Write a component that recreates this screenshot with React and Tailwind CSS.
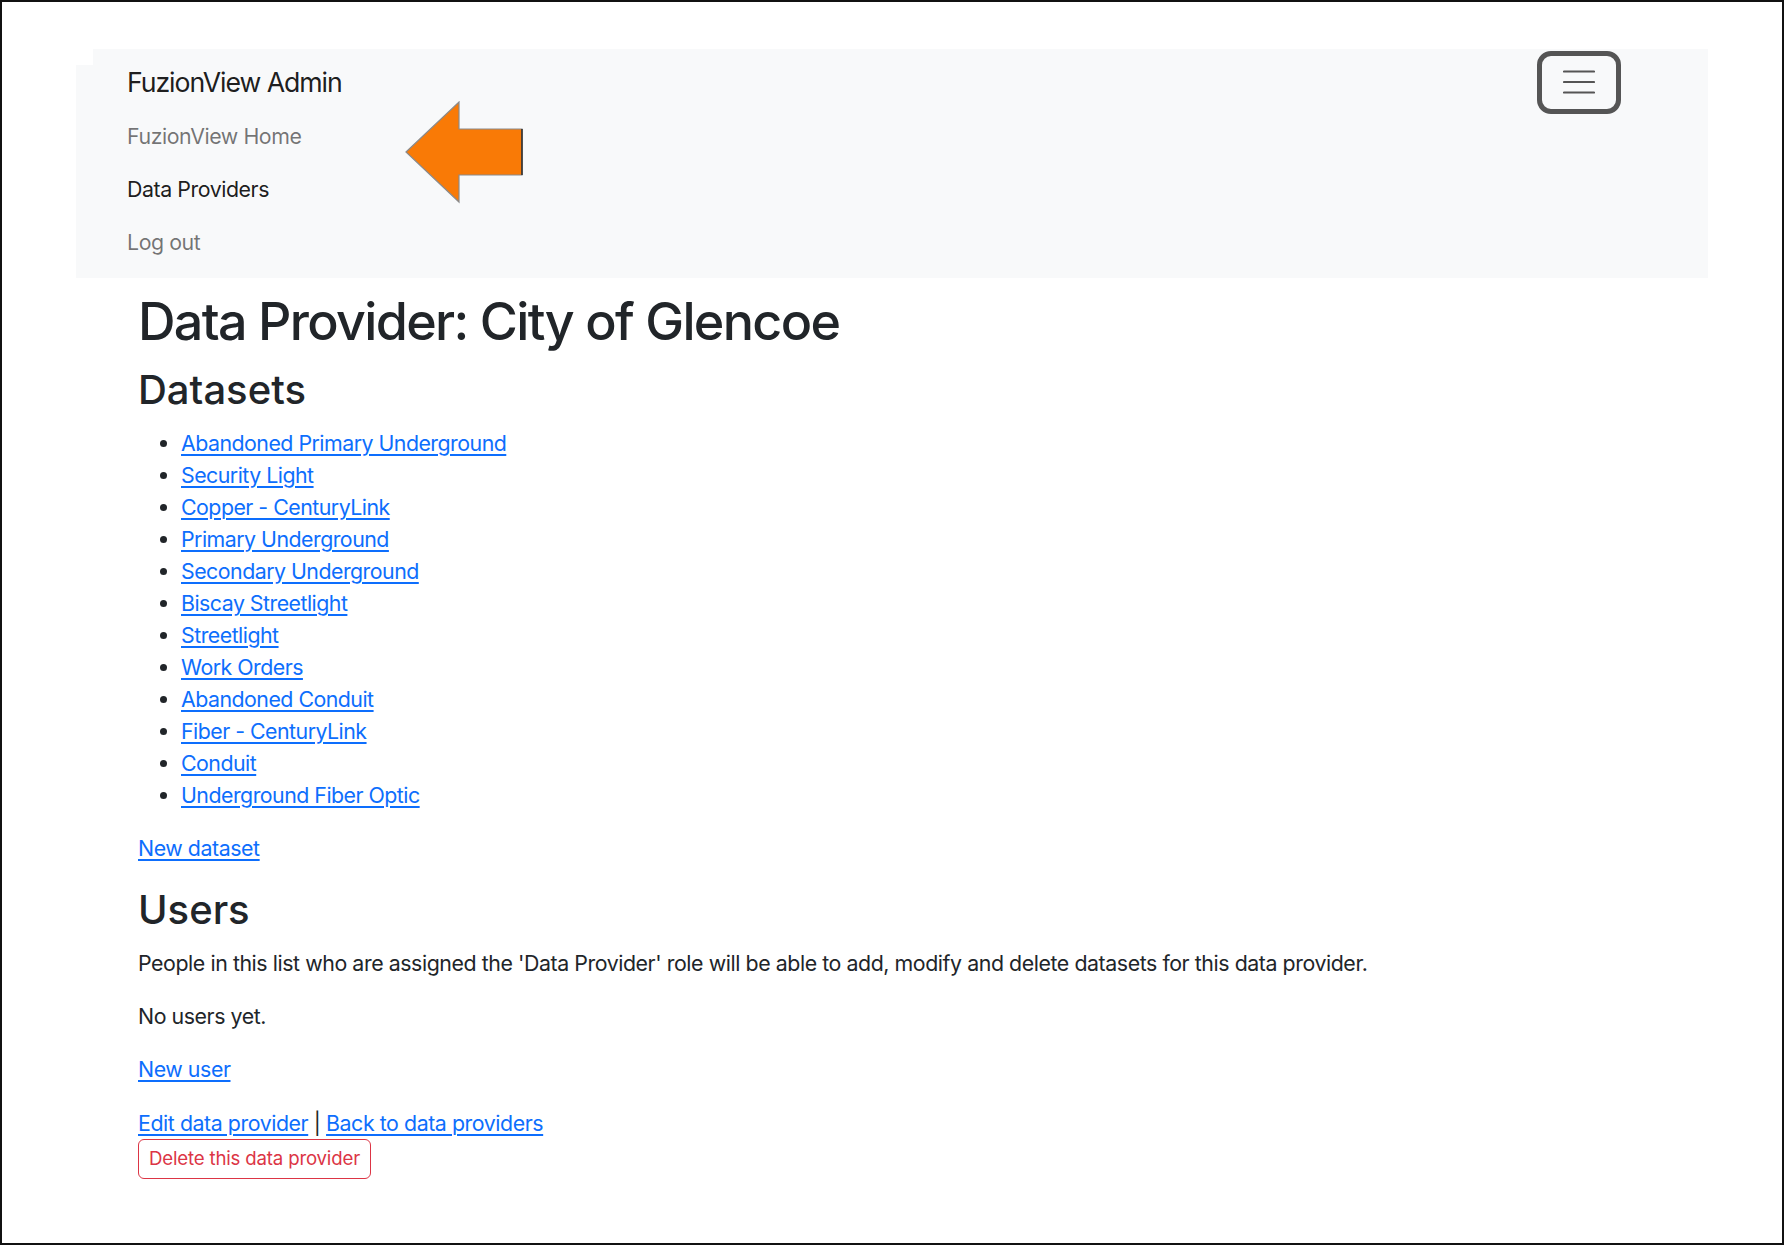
import React from "react";

const datasets = [
  "Abandoned Primary Underground",
  "Security Light",
  "Copper - CenturyLink",
  "Primary Underground",
  "Secondary Underground",
  "Biscay Streetlight",
  "Streetlight",
  "Work Orders",
  "Abandoned Conduit",
  "Fiber - CenturyLink",
  "Conduit",
  "Underground Fiber Optic",
];

const linkCls = "text-[#0d6efd] underline underline-offset-[3px] decoration-[1.5px]";

function Arrow() {
  return (
    <svg
      className="absolute left-[329px] top-[52px]"
      width="120"
      height="104"
      viewBox="0 0 120 104"
    >
      <polygon
        points="1,51 54,1 54,28 117,28 117,74 54,74 54,101"
        fill="#f97a06"
        stroke="#8a8a8a"
        strokeWidth="1.2"
      />
      <line x1="117" y1="28" x2="117" y2="74" stroke="#222" strokeWidth="1.4" />
    </svg>
  );
}

export default function App() {
  return (
    <div className="w-[1784px] h-[1245px] border-2 border-[#111] bg-white overflow-hidden font-['Inter',sans-serif] text-[#212529]">
      {/* Navbar (collapsed menu open) */}
      <nav className="relative ml-[74px] mt-[47px] w-[1632px] bg-[#f8f9fa] pt-[13px] pb-[9px] pl-[51px] pr-[87px]">
        <div className="absolute left-0 top-0 w-[17px] h-[16px] bg-white" />
        <div className="flex h-[40px] items-center justify-between">
          <span className="text-[26.67px] leading-[40px] tracking-[-0.04em] text-black/90">FuzionView Admin</span>
          <button className="flex h-[63px] w-[84px] shrink-0 items-center justify-center rounded-[14px] border-[5px] border-[#555]">
            <svg width="32" height="24" viewBox="0 0 32 24">
              <g stroke="#555" strokeWidth="2.2" strokeLinecap="round">
                <line x1="1" y1="1.5" x2="31" y2="1.5" />
                <line x1="1" y1="12" x2="31" y2="12" />
                <line x1="1" y1="22.5" x2="31" y2="22.5" />
              </g>
            </svg>
          </button>
        </div>
        <ul className="mt-[7px] flex flex-col text-[21.33px] leading-[32px] tracking-[-0.02em]">
          <li className="py-[10.67px] text-black/55">FuzionView Home</li>
          <li className="py-[10.67px] text-black/90">Data Providers</li>
          <li className="py-[10.67px] text-black/55">Log out</li>
        </ul>
        <Arrow />
      </nav>

      {/* Main content */}
      <main className="ml-[136px] mt-[13px] text-[21.33px] leading-[32px] tracking-[-0.02em]">
        <h1 className="text-[52px] leading-[62px] font-medium tracking-[-0.032em] mb-[13px]">Data Provider: City of Glencoe</h1>
        <h2 className="text-[40px] leading-[48px] font-medium tracking-normal mb-[13px]">Datasets</h2>
        <ul className="list-disc pl-[43px] mb-[21.33px] tracking-[-0.024em]">
          {datasets.map((d) => (
            <li key={d}>
              <a href="#" className={linkCls}>{d}</a>
            </li>
          ))}
        </ul>
        <p className="mb-[21.33px]">
          <a href="#" className={linkCls}>New dataset</a>
        </p>
        <h2 className="text-[40px] leading-[48px] font-medium tracking-normal mb-[13px]">Users</h2>
        <p className="mb-[21.33px]">
          People in this list who are assigned the 'Data Provider' role will be able to add, modify and delete datasets for this data provider.
        </p>
        <p className="mb-[21.33px]">No users yet.</p>
        <p className="mb-[21.33px]">
          <a href="#" className={linkCls}>New user</a>
        </p>
        <p>
          <a href="#" className={linkCls}>Edit data provider</a> |{" "}
          <a href="#" className={linkCls}>Back to data providers</a>
        </p>
        <button className="h-[40px] rounded-[6px] border border-[#dc3545] px-[10px] text-[18.67px] leading-[28px] tracking-[-0.01em] text-[#dc3545]">
          Delete this data provider
        </button>
      </main>
    </div>
  );
}
